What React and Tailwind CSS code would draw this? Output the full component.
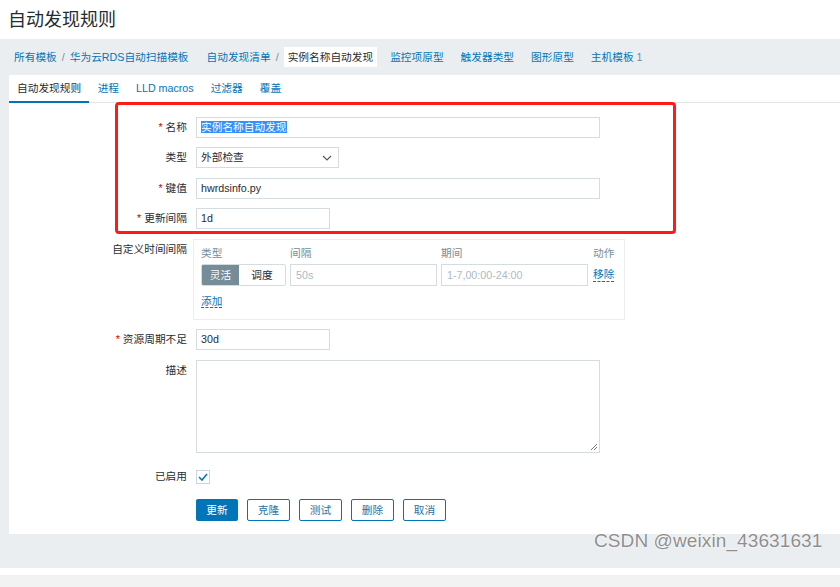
import React from "react";

const font = { fontFamily: '"Liberation Sans", Arial, "Noto Sans CJK SC", sans-serif' };

function Field({ label, required, children, className = "" }) {
  return (
    <div className={"grid grid-cols-[178px_1fr] gap-x-[9px] " + className}>
      <div className="text-right text-[10.7px] text-[#1f2c33] leading-[21px] whitespace-nowrap">
        {required && <span className="text-[#d40000] mr-[3px]">*</span>}
        {label}
      </div>
      <div>{children}</div>
    </div>
  );
}

function Box({ w, children, className = "" }) {
  return (
    <div
      className={
        "h-[21px] border border-[#d5dce0] bg-white px-[4px] text-[10.7px] leading-[19px] text-[#1f2c33] " +
        className
      }
      style={{ width: w }}
    >
      {children}
    </div>
  );
}

export default function App() {
  return (
    <div className="relative w-[840px] h-[587px] overflow-hidden bg-[#ebeef0]" style={font}>
      {/* header */}
      <div className="h-[39px] bg-white px-[8px] flex items-center">
        <div className="text-[18px] leading-[22px] text-[#1f2c33]">自动发现规则</div>
      </div>

      {/* breadcrumbs */}
      <div className="h-[36px] flex items-center pl-[14px] text-[10.7px] text-[#0275b8]">
        <span>所有模板</span>
        <span className="text-[#768d99] mx-[5px]">/</span>
        <span>华为云RDS自动扫描模板</span>
        <span className="ml-[18px]">自动发现清单</span>
        <span className="text-[#768d99] mx-[5px]">/</span>
        <span className="bg-white text-[#1f2c33] px-[4px] py-[2px]">实例名称自动发现</span>
        <span className="ml-[13px]">监控项原型</span>
        <span className="ml-[17px]">触发器类型</span>
        <span className="ml-[17px]">图形原型</span>
        <span className="ml-[17px]">主机模板 <span className="text-[#768d99]">1</span></span>
      </div>

      {/* panel */}
      <div className="ml-[9px] bg-white h-[459px]">
        {/* tabs */}
        <div className="h-[28px] flex items-stretch text-[10.7px] border-b border-[#e3e6e8]">
          <div className="px-[8px] flex items-center text-[#1f2c33] border-b-2 border-[#0275b8] -mb-px">自动发现规则</div>
          <div className="px-[8.5px] flex items-center text-[#0275b8]">进程</div>
          <div className="px-[8.5px] flex items-center text-[#0275b8]">LLD macros</div>
          <div className="px-[8.5px] flex items-center text-[#0275b8]">过滤器</div>
          <div className="px-[8.5px] flex items-center text-[#0275b8]">覆盖</div>
        </div>

        <div className="pt-[14px]">
          <Field label="名称" required className="mb-[9px]">
            <Box w={404} className="border-[#6fa6d6]">
              <span className="bg-[#3390ff] text-white">实例名称自动发现</span>
            </Box>
          </Field>
          <Field label="类型" className="mb-[10px]">
            <Box w={143} className="flex items-center justify-between">
              <span>外部检查</span>
              <svg width="10" height="6" viewBox="0 0 10 6" className="mr-[2px]">
                <path d="M1 1l4 4 4-4" fill="none" stroke="#4f5b61" strokeWidth="1.2" />
              </svg>
            </Box>
          </Field>
          <Field label="键值" required className="mb-[9px]">
            <Box w={404}>hwrdsinfo.py</Box>
          </Field>
          <Field label="更新间隔" required className="mb-[10px]">
            <Box w={134}>1d</Box>
          </Field>

          <Field label="自定义时间间隔" className="mb-[9px]">
            <div className="-ml-[3px] w-[432px] h-[81px] border border-[#ebeef0] px-[7px] pt-[6px]">
              <div className="flex text-[10.7px] text-[#768d99] leading-[14px]">
                <span className="w-[89px]">类型</span>
                <span className="w-[151px]">间隔</span>
                <span className="w-[152px]">期间</span>
                <span>动作</span>
              </div>
              <div className="flex items-center mt-[4px] text-[10.7px]">
                <div className="flex h-[22px] w-[85px] rounded-[2px] overflow-hidden border border-[#d5dce0]">
                  <div className="w-[37px] bg-[#768d99] text-white flex items-center justify-center">灵活</div>
                  <div className="flex-1 bg-white text-[#1f2c33] flex items-center justify-center">调度</div>
                </div>
                <div className="ml-[4px] w-[147px] h-[22px] border border-[#d5dce0] px-[5px] leading-[20px] text-[#acbbc2]">50s</div>
                <div className="ml-[4px] w-[147px] h-[22px] border border-[#d5dce0] px-[5px] leading-[20px] text-[#acbbc2]">1-7,00:00-24:00</div>
                <span className="ml-[5px] text-[#0275b8] border-b border-dashed border-[#0275b8] leading-[13px]">移除</span>
              </div>
              <div className="mt-[7px] text-[10.7px]">
                <span className="text-[#0275b8] border-b border-dashed border-[#0275b8] leading-[13px]">添加</span>
              </div>
            </div>
          </Field>

          <Field label="资源周期不足" required className="mb-[10px]">
            <Box w={134}>30d</Box>
          </Field>

          <Field label="描述" className="mb-[13px]">
            <div className="relative w-[404px] h-[93px] border border-[#d5dce0]">
              <svg width="8" height="8" viewBox="0 0 8 8" className="absolute right-[1px] bottom-[1px]">
                <path d="M7 1L1 7M7 4L4 7" stroke="#777" strokeWidth="1" />
              </svg>
            </div>
          </Field>

          <Field label="已启用" className="mb-[11px]">
            <div className="h-[22px] flex items-center">
              <div className="w-[14px] h-[14px] border border-[#ccd5d9] flex items-center justify-center">
                <svg width="10" height="8" viewBox="0 0 10 8">
                  <path d="M1 4l3 3 5-6" fill="none" stroke="#0275b8" strokeWidth="1.6" />
                </svg>
              </div>
            </div>
          </Field>

          <div className="grid grid-cols-[178px_1fr] gap-x-[9px]">
            <div />
            <div className="flex gap-[9px] text-[10.7px]">
              <div className="h-[22px] w-[42px] rounded-[2px] bg-[#0275b8] text-white flex items-center justify-center">更新</div>
              {["克隆", "测试", "删除", "取消"].map((t) => (
                <div key={t} className="h-[22px] w-[43px] rounded-[2px] border border-[#0275b8] bg-white text-[#2a6fa0] flex items-center justify-center">
                  {t}
                </div>
              ))}
            </div>
          </div>
        </div>
      </div>

      {/* footer strips */}
      <div className="absolute left-0 right-0 top-[568px] h-[7px] bg-white" />
      <div className="absolute left-0 right-0 top-[575px] h-[12px] bg-[#f2f2f2]" />

      {/* screenshot annotation */}
      <div className="absolute left-[115px] top-[102px] w-[561px] h-[132px] border-[3px] border-[#ff1a1a] rounded-[4px] pointer-events-none" />

      {/* watermark */}
      <div
        className="absolute left-[594px] top-[527px] text-[19px] text-[#8f8f8f] tracking-[0.1px]"
        style={{ textShadow: "0 0 2px #fff, 0 0 1px #fff" }}
      >
        CSDN @weixin_43631631
      </div>
    </div>
  );
}
